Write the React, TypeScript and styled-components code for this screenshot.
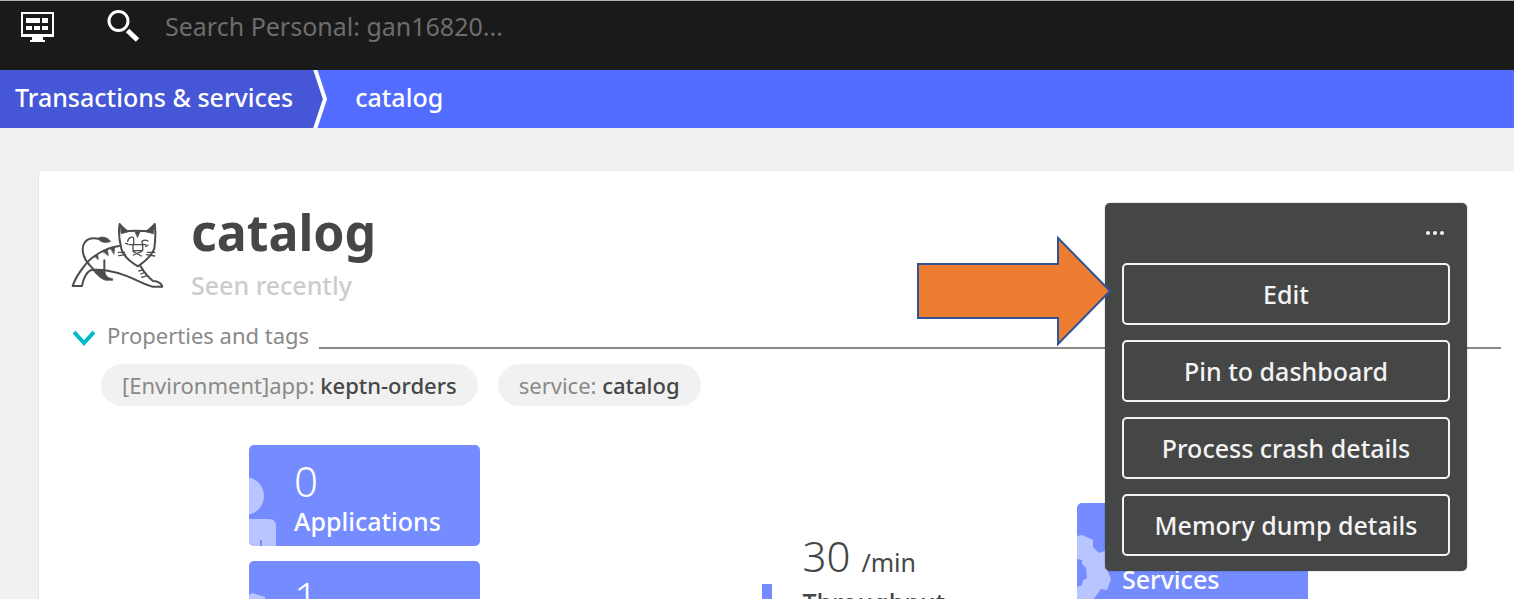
import React from "react";
import styled, { createGlobalStyle } from "styled-components";

const GlobalStyle = createGlobalStyle`
  * { box-sizing: border-box; }
  body { margin: 0; background: #fff; }
  body, button, input { font-family: "Noto Sans", "Open Sans", sans-serif; }
  h1, p { margin: 0; }
`;

const Page = styled.div`
  height: calc(100vh - 7px);
  display: flex;
  flex-direction: column;
  overflow: hidden;
  background: #f1f1f1;
`;

const TopBar = styled.header`
  flex: none;
  display: flex;
  align-items: flex-start;
  height: 70px;
  padding: 7px 20px 0;
  border-top: 1px solid #b0b2b0;
  background: #1a1a1a;
`;

const IconButton = styled.button`
  display: flex;
  padding: 0;
  border: 0;
  background: none;
  cursor: pointer;
`;

const BarButton = styled(IconButton)`
  padding-top: 4px;
`;

const SearchBox = styled.label`
  flex: 1;
  display: flex;
  align-items: center;
  gap: 25px;
  margin-left: 52px;
`;

const SearchInput = styled.input`
  flex: 1;
  height: 36px;
  padding: 0;
  border: 0;
  outline: 0;
  background: none;
  color: #fff;
  font-size: 25px;
  line-height: 36px;
  &::placeholder { color: #6d6d6d; opacity: 1; }
`;

const Breadcrumbs = styled.nav`
  flex: none;
  display: flex;
  height: 58px;
  background: #526cff;
`;

const Crumb = styled.a<{ $root?: boolean }>`
  padding: ${(p) => (p.$root ? "0 20px 0 15px" : "0 28px")};
  background: ${(p) => (p.$root ? "#4556d7" : "none")};
  color: #fff;
  font-size: 25px;
  font-weight: 500;
  line-height: 54px;
  text-decoration: none;
  white-space: nowrap;
`;

const Card = styled.main`
  position: relative;
  flex: 1 0 auto;
  margin: 42px 0 0 38px;
  padding: 34px 13px 0 32px;
  border: 1px solid #e6e6e6;
  border-width: 1px 0 0 1px;
  border-radius: 3px 0 0 0;
  background: #fff;
`;

const Heading = styled.div`
  display: flex;
  align-items: center;
  gap: 28px;
`;

const Title = styled.h1`
  color: #454646;
  font-size: 50px;
  font-weight: 700;
  line-height: 54px;
`;

const Subtitle = styled.p`
  margin-top: 6px;
  color: #cccccc;
  font-size: 25px;
  font-weight: 500;
  line-height: 40px;
`;

const PropertiesToggle = styled.button`
  display: flex;
  align-items: center;
  gap: 10px;
  width: 100%;
  height: 32px;
  margin-top: 14px;
  padding: 0 0 0 2px;
  border: 0;
  background: none;
  color: #898989;
  font-size: 22px;
  line-height: 30px;
  cursor: pointer;
`;

const Chevron = styled.svg`
  margin: 6px 2px 0 0;
`;

const Rule = styled.span`
  flex: 1;
  align-self: flex-end;
  height: 2px;
  margin-bottom: 2px;
  background: #898989;
`;

const Tags = styled.div`
  display: flex;
  gap: 20px;
  margin: 13px 0 0 30px;
`;

const Tag = styled.span`
  height: 42px;
  padding: 0 21px;
  border-radius: 21px;
  background: #f1f1f1;
  color: #898989;
  font-size: 22px;
  line-height: 42px;
  white-space: nowrap;
`;

const TagValue = styled.span`
  color: #454646;
  font-weight: 500;
`;

const Infographic = styled.section`
  display: grid;
  grid-template-columns: 231px 1fr 1fr 231px;
  align-items: start;
  margin-top: 39px;
  padding: 0 193px 0 178px;
`;

const TileStack = styled.div<{ $low?: boolean }>`
  display: grid;
  gap: 15px;
  padding-top: ${(p) => (p.$low ? "58px" : "0")};
`;

const Tile = styled.a`
  position: relative;
  display: block;
  height: 101px;
  padding: 11px 0 0 45px;
  border-radius: 5px;
  overflow: hidden;
  background: #748cff;
  color: #fff;
  text-decoration: none;
`;

const TileArt = styled.svg`
  position: absolute;
  left: 0;
  top: 0;
  fill: #b9c5ff;
`;

const Figure = styled.div`
  font-size: 42px;
  font-weight: 300;
  line-height: 50px;
`;

const Caption = styled.div`
  font-size: 25px;
  font-weight: 500;
  line-height: 30px;
`;

const Chart = styled.div`
  justify-self: end;
  width: 10px;
  height: 60px;
  margin: 139px 7px 0 0;
  background: #748cff;
`;

const Throughput = styled.div`
  padding: 86px 0 0 24px;
  color: #454646;
`;

const Unit = styled.span`
  font-size: 25px;
  font-weight: 400;
`;

const Menu = styled.aside`
  position: absolute;
  top: 32px;
  right: 47px;
  display: grid;
  gap: 15px;
  width: 362px;
  padding: 15px 17px;
  border-radius: 5px;
  background: #454646;
  box-shadow: 0 0 2px rgba(0, 0, 0, 0.3);
`;

const MoreButton = styled(IconButton)`
  justify-self: end;
  height: 30px;
  padding: 12px 5px;
`;

const MenuButton = styled.button`
  height: 62px;
  padding: 0;
  border: 2px solid #f4f4f4;
  border-radius: 5px;
  background: none;
  color: #f4f4f4;
  font-size: 25px;
  font-weight: 500;
  cursor: pointer;
`;

const Arrow = styled.svg`
  position: absolute;
  top: 32px;
  right: 356px;
`;

function MonitorIcon() {
  return (
    <svg width="34" height="31" viewBox="0 0 34 31" fill="#fff">
      <path fillRule="evenodd" d="M1 0H34V25H23V28H25V30H10V28H12V25H1ZM3 2V22H32V2Z" />
      <path d="M6 6H20V11H6ZM22 6H28V11H22ZM6 14H12V18H6ZM14 14H20V18H14ZM22 14H28V18H22Z" />
    </svg>
  );
}

function SearchIcon() {
  return (
    <svg width="34" height="33" viewBox="0 0 34 33" fill="none" stroke="#fff">
      <circle cx="12.5" cy="11" r="9.5" strokeWidth="3" />
      <path d="M21.5 20.5L31.5 30" strokeWidth="5" />
    </svg>
  );
}

function CatIcon() {
  return (
    <svg width="92" height="70" viewBox="18 30 276 210" fill="none" stroke="#4b4c4c" strokeWidth="6" strokeLinejoin="round" strokeLinecap="round">
      <path d="M162 108C120 114 78 140 58 168C40 190 30 207 23 228H51C54 212 59 190 76 181C104 176 150 183 188 199C220 212 240 224 263 230H292C289 217 272 213 264 213C250 202 237 187 227 169" />
      <path d="M72 163C55 145 46 115 60 96C70 84 84 83 99 86" />
      <path fill="#4b4c4c" strokeWidth="2" d="M98 85C108 78 126 80 137 94C124 101 105 98 98 85Z" />
      <path d="M72 163L94 187M118 151V173C117 184 119 196 125 203" />
      <path fill="#4b4c4c" strokeWidth="2" d="M82 177L114 180C118 195 125 203 143 206V211H122C105 206 92 191 82 177Z" />
      <path fill="#4b4c4c" strokeWidth="2" d="M90 140L98 134L100 148ZM113 124L127 118L130 136ZM136 114L149 110L147 132Z" />
      <path d="M176 65C190 61 235 62 252 64L269 42C273 66 271 91 268 115C262 137 240 154 219 169C198 157 176 140 169 116C163 91 160 62 164 42C169 50 175 57 176 65" />
      <path fill="#4b4c4c" strokeWidth="2" d="M164 41L191 65L169 71ZM269 41L241 65L265 71ZM210 65H225L218 82Z" />
      <path strokeWidth="4" d="M188 94C191 79 208 78 206 88V105M233 102C225 93 239 87 249 93M192 104H242M204 105V122H233V105M205 135L229 125M205 125L229 138M160 127H179M161 137L182 134M247 127H270M245 134L269 138" />
      <path strokeWidth="4" d="M222 183L234 179M227 192L240 187M230 202L247 197M182 100L188 102M242 109L249 105" />
    </svg>
  );
}

function BreadcrumbDivider() {
  return (
    <svg width="14" height="58" viewBox="0 0 14 58">
      <path d="M0 0H2L12 29L2 58H0Z" fill="#4556d7" />
      <path d="M2 -1L12 29L2 59" fill="none" stroke="#fff" strokeWidth="4" />
    </svg>
  );
}

export default function App() {
  return (
    <>
      <GlobalStyle />
      <Page>
        <TopBar>
          <BarButton aria-label="Dashboards"><MonitorIcon /></BarButton>
          <SearchBox>
            <SearchIcon />
            <SearchInput aria-label="Search" placeholder="Search Personal: gan16820..." />
          </SearchBox>
        </TopBar>
        <Breadcrumbs>
          <Crumb $root href="#services">Transactions &amp; services</Crumb>
          <BreadcrumbDivider />
          <Crumb href="#catalog">catalog</Crumb>
        </Breadcrumbs>
        <Card>
          <Heading>
            <CatIcon />
            <div>
              <Title>catalog</Title>
              <Subtitle>Seen recently</Subtitle>
            </div>
          </Heading>
          <PropertiesToggle>
            <Chevron width="22" height="16" viewBox="0 0 22 16" fill="none" stroke="#00b9cc" strokeWidth="4">
              <path d="M1 2L11 13L21 2" />
            </Chevron>
            Properties and tags
            <Rule />
          </PropertiesToggle>
          <Tags>
            <Tag>[Environment]app: <TagValue>keptn-orders</TagValue></Tag>
            <Tag>service: <TagValue>catalog</TagValue></Tag>
          </Tags>
          <Infographic>
            <TileStack>
              <Tile href="#applications">
                <TileArt width="45" height="101">
                  <circle cx="-4" cy="51" r="19" />
                  <path d="M0 74H20Q27 74 27 81V101H13V95H11V101H0Z" />
                </TileArt>
                <Figure>0</Figure>
                <Caption>Applications</Caption>
              </Tile>
              <Tile href="#services-in">
                <TileArt width="45" height="101">
                  <path d="M0 34L3 32L16 36V60H0Z" />
                </TileArt>
                <Figure>1</Figure>
              </Tile>
            </TileStack>
            <Chart />
            <Throughput>
              <Figure>30 <Unit>/min</Unit></Figure>
              <Caption>Throughput</Caption>
            </Throughput>
            <TileStack $low>
              <Tile href="#services-out">
                <TileArt width="45" height="101">
                  <path d="M0 33L5 32L16 37V44L22 50L28 48V62L34 76L30 87L24 86L13 101H0V84L5 82L6 77L10 75L9 65L5 61V57L0 56Z" />
                </TileArt>
                <Figure>2</Figure>
                <Caption>Services</Caption>
              </Tile>
            </TileStack>
          </Infographic>
          <Menu>
            <MoreButton aria-label="More actions">
              <svg width="20" height="6" viewBox="0 0 20 6" fill="#f4f4f4">
                <circle cx="3" cy="3" r="2" /><circle cx="10" cy="3" r="2" /><circle cx="17" cy="3" r="2" />
              </svg>
            </MoreButton>
            <MenuButton>Edit</MenuButton>
            <MenuButton>Pin to dashboard</MenuButton>
            <MenuButton>Process crash details</MenuButton>
            <MenuButton>Memory dump details</MenuButton>
            <Arrow width="195" height="112" viewBox="0 0 195 112">
              <path d="M2 29H142V3L194 56L142 109V83H2Z" fill="#ed7d31" stroke="#2f5597" strokeWidth="2" />
            </Arrow>
          </Menu>
        </Card>
      </Page>
    </>
  );
}
